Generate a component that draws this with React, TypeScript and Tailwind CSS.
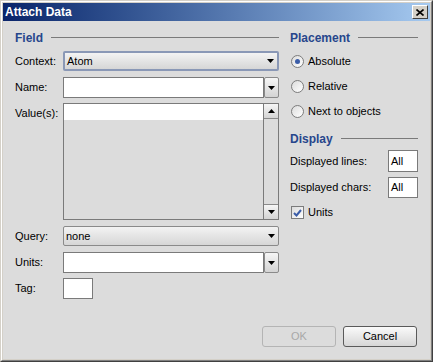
import React from "react";

const font = { fontFamily: '"Liberation Sans", Arial, sans-serif' };

function Arrow({ up }: { up?: boolean }) {
  return (
    <svg width="7" height="4" viewBox="0 0 7 4" className="block">
      {up ? <path d="M3.5 0 L7 4 L0 4 Z" fill="#000" /> : <path d="M0 0 L7 0 L3.5 4 Z" fill="#000" />}
    </svg>
  );
}

function Combo({ value, focused }: { value: string; focused?: boolean }) {
  return (
    <div
      className={`h-[20px] flex items-center justify-between pl-[2px] pr-[3px] rounded-[2px] bg-gradient-to-b from-[#f3f3f3] to-[#d6d6d6] ${
        focused ? "border-2 border-[#8a98b6]" : "border border-[#8a8a8a]"
      }`}
    >
      <span>{value}</span>
      <Arrow />
    </div>
  );
}

function EditCombo() {
  return (
    <div className="h-[21px] flex">
      <div className="flex-1 bg-white border border-[#7a7a7a]" />
      <div className="w-[15px] flex items-center justify-center border border-[#8a8a8a] rounded-[2px] bg-gradient-to-b from-[#f6f6f6] to-[#d4d4d4]">
        <Arrow />
      </div>
    </div>
  );
}

function Header({ title }: { title: string }) {
  return (
    <div className="h-[13px] flex items-center gap-[8px]">
      <span className="font-bold text-[12px] text-[#27468c]">{title}</span>
      <div className="flex-1 h-px bg-[#7a7a7a]" />
    </div>
  );
}

function Row({ label, children, className }: { label: string; children: React.ReactNode; className?: string }) {
  return (
    <div className={`flex ${className ?? ""}`}>
      <span className="w-[48px] shrink-0 pt-[2px]">{label}</span>
      <div className="flex-1">{children}</div>
    </div>
  );
}

function Radio({ label, checked }: { label: string; checked?: boolean }) {
  return (
    <div className="h-[14px] flex items-center gap-[4px] pl-[1px]">
      <div className="w-[13px] h-[13px] rounded-full border border-[#7c7c7c] bg-gradient-to-br from-[#dcdcdc] to-[#ffffff] flex items-center justify-center">
        {checked && <div className="w-[5px] h-[5px] rounded-full bg-[#3b5da8]" />}
      </div>
      <span>{label}</span>
    </div>
  );
}

export default function App() {
  return (
    <div
      style={font}
      className="w-[433px] h-[362px] bg-[#d4d0c8] border border-t-[#d4d0c8] border-l-[#d4d0c8] border-r-[#404040] border-b-[#404040] text-[11px] text-black"
    >
      <div className="w-full h-full border border-t-white border-l-white border-r-[#808080] border-b-[#808080] p-px flex flex-col">
        {/* title bar */}
        <div className="h-[18px] shrink-0 flex items-center justify-between bg-gradient-to-r from-[#0a246a] to-[#a6caf0] pl-[2px] pr-[2px]">
          <span className="font-bold text-[12px] text-white">Attach Data</span>
          <div className="w-[16px] h-[14px] bg-[#d4d0c8] border border-t-white border-l-white border-r-[#404040] border-b-[#404040] flex items-center justify-center">
            <svg width="8" height="7" viewBox="0 0 8 7">
              <path d="M0.5 0.5 L7.5 6.5 M7.5 0.5 L0.5 6.5" stroke="#000" strokeWidth="1.6" />
            </svg>
          </div>
        </div>

        {/* body */}
        <div className="flex-1 bg-[#dcdcdc] flex flex-col pl-[12px] pr-[12px] pt-[10px] pb-[12px]">
          <div className="flex gap-[11px]">
            {/* left column */}
            <div className="w-[264px] flex flex-col">
              <Header title="Field" />
              <Row label="Context:" className="mt-[7px]">
                <Combo value="Atom" focused />
              </Row>
              <Row label="Name:" className="mt-[6px]">
                <EditCombo />
              </Row>
              <Row label="Value(s):" className="mt-[5px]">
                <div className="h-[117px] border border-[#7a7a7a] flex">
                  <div className="flex-1">
                    <div className="h-[16px] bg-white" />
                  </div>
                  <div className="w-[15px] border-l border-[#7a7a7a] flex flex-col justify-between">
                    <div className="h-[15px] flex items-center justify-center bg-gradient-to-b from-[#f6f6f6] to-[#d4d4d4] border-b border-[#8a8a8a]">
                      <Arrow up />
                    </div>
                    <div className="h-[15px] flex items-center justify-center bg-gradient-to-b from-[#f6f6f6] to-[#d4d4d4] border-t border-[#8a8a8a]">
                      <Arrow />
                    </div>
                  </div>
                </div>
              </Row>
              <Row label="Query:" className="mt-[6px]">
                <Combo value="none" />
              </Row>
              <Row label="Units:" className="mt-[6px]">
                <EditCombo />
              </Row>
              <Row label="Tag:" className="mt-[5px]">
                <div className="w-[30px] h-[21px] bg-white border border-[#7a7a7a]" />
              </Row>
            </div>

            {/* right column */}
            <div className="w-[128px] flex flex-col">
              <Header title="Placement" />
              <div className="mt-[10px] flex flex-col gap-[11px]">
                <Radio label="Absolute" checked />
                <Radio label="Relative" />
                <Radio label="Next to objects" />
              </div>
              <div className="mt-[14px]">
                <Header title="Display" />
              </div>
              <div className="mt-[5px] flex items-center justify-between">
                <span>Displayed lines:</span>
                <div className="w-[30px] h-[22px] bg-white border border-[#7a7a7a] flex items-center pl-[2px]">All</div>
              </div>
              <div className="mt-[5px] flex items-center justify-between">
                <span>Displayed chars:</span>
                <div className="w-[30px] h-[21px] bg-white border border-[#7a7a7a] flex items-center pl-[2px]">All</div>
              </div>
              <div className="mt-[8px] h-[13px] flex items-center gap-[4px] pl-[1px]">
                <div className="w-[13px] h-[13px] border border-[#7c7c7c] bg-gradient-to-br from-[#dcdcdc] to-[#ffffff] flex items-center justify-center">
                  <svg width="9" height="8" viewBox="0 0 9 8">
                    <path d="M1 4 L3.5 6.5 L8 1" fill="none" stroke="#3b5da8" strokeWidth="2" />
                  </svg>
                </div>
                <span>Units</span>
              </div>
            </div>
          </div>

          {/* footer */}
          <div className="mt-auto flex justify-end gap-[7px] pr-px">
            <div className="w-[74px] h-[21px] rounded-[3px] border border-[#b4b4b4] flex items-center justify-center text-[#a8a8a8]">
              OK
            </div>
            <div className="w-[74px] h-[21px] rounded-[3px] border border-[#5a5a5a] bg-gradient-to-b from-[#fafafa] to-[#d6d6d6] flex items-center justify-center">
              Cancel
            </div>
          </div>
        </div>
      </div>
    </div>
  );
}
